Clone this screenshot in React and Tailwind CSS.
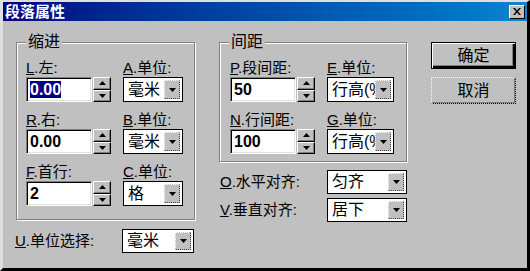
import React from 'react';

const FONT = "font-['Liberation_Sans','Noto_Sans_CJK_SC',sans-serif]";

function Arrow({ up }) {
  return (
    <svg width="7" height="4" viewBox="0 0 7 4" className="block">
      {up ? <path d="M3.5 0 L7 4 L0 4 Z" fill="#000" /> : <path d="M0 0 L7 0 L3.5 4 Z" fill="#000" />}
    </svg>
  );
}

function Label({ k, text }) {
  return (
    <div className="h-[18px] leading-[18px] text-[15px] whitespace-nowrap">
      <span className="underline">{k}</span>.{text}:
    </div>
  );
}

function Spinner() {
  return (
    <div className="flex flex-col w-[18px] h-[25px]">
      {[true, false].map((up) => (
        <div key={String(up)} className="flex-1 flex items-center justify-center bg-[#c0c0c0] border border-t-white border-l-white border-r-black border-b-black shadow-[inset_-1px_-1px_#808080]">
          <Arrow up={up} />
        </div>
      ))}
    </div>
  );
}

function NumberInput({ value, selected }) {
  return (
    <div className="w-[66px] h-[25px] bg-white border border-t-[#808080] border-l-[#808080] border-r-white border-b-white shadow-[inset_1px_1px_#000,inset_-1px_-1px_#dfdfdf] flex items-center pl-[3px]">
      <span className={selected ? 'bg-[#000080] text-white text-[16px] font-bold leading-[17px]' : 'text-[16px] font-bold leading-[17px]'}>{value}</span>
    </div>
  );
}

function Combo({ value, w, h = 'h-[25px]' }) {
  return (
    <div className={`${w} ${h} bg-white border border-black flex items-stretch p-[2px]`}>
      <div className="flex-1 overflow-hidden whitespace-nowrap text-[16px] leading-[18px] pl-[2px] flex items-center">{value}</div>
      <div className="w-[16px] shrink-0 bg-[#c0c0c0] border border-dotted border-t-white border-l-white border-r-[#404040] border-b-[#404040] flex items-center justify-center">
        <Arrow />
      </div>
    </div>
  );
}

function Group({ title, className, children }) {
  return (
    <div className={`relative border border-[#808080] shadow-[1px_1px_#fff,inset_1px_1px_#fff] ${className}`}>
      <div className="absolute -top-[10px] left-[9px] bg-[#c0c0c0] px-[2px] text-[16px] leading-[18px]">{title}</div>
      {children}
    </div>
  );
}

function Field({ k, text, value, selected }) {
  return (
    <div>
      <Label k={k} text={text} />
      <div className="flex gap-[1px]">
        <NumberInput value={value} selected={selected} />
        <Spinner />
      </div>
    </div>
  );
}

function UnitField({ k, value, w }) {
  return (
    <div>
      <Label k={k} text="单位" />
      <Combo value={value} w={w} />
    </div>
  );
}

export default function App() {
  return (
    <div className={`${FONT} w-[530px] h-[271px] bg-[#c0c0c0] text-black border-t-2 border-l-[3px] border-r-[3px] border-b-[3px] border-t-[#dfdfdf] border-l-[#dfdfdf] border-r-black border-b-black overflow-hidden`}>
      <div className="h-[19px] bg-linear-to-r from-[#000080] to-[#1084d0] flex items-center justify-between pl-[2px] pr-[2px]">
        <span className="text-white font-bold text-[15px] leading-[17px]">段落属性</span>
        <div className="w-[16px] h-[14px] bg-[#c0c0c0] border border-t-white border-l-white border-r-black border-b-black flex items-center justify-center">
          <svg width="8" height="7" viewBox="0 0 8 7">
            <path d="M0 0 L2 0 L4 2.5 L6 0 L8 0 L5 3.5 L8 7 L6 7 L4 4.5 L2 7 L0 7 L3 3.5 Z" fill="#000" />
          </svg>
        </div>
      </div>

      <div className="flex pt-[21px] pl-[13px]">
        <div className="w-[179px]">
          <Group title="缩进" className="h-[178px] pt-[16px] pl-[9px] flex flex-col gap-[9px]">
            <div className="flex gap-[12px]">
              <Field k="L" text="左" value="0.00" selected />
              <UnitField k="A" value="毫米" w="w-[60px]" />
            </div>
            <div className="flex gap-[12px]">
              <Field k="R" text="右" value="0.00" />
              <UnitField k="B" value="毫米" w="w-[60px]" />
            </div>
            <div className="flex gap-[12px]">
              <Field k="F" text="首行" value="2" />
              <UnitField k="C" value="格" w="w-[60px]" />
            </div>
          </Group>
          <div className="flex items-center mt-[9px]">
            <div className="w-[107px] text-[15px] leading-[18px] -ml-[1px]">
              <span className="underline">U</span>.单位选择:
            </div>
            <Combo value="毫米" w="w-[72px]" h="h-[24px]" />
          </div>
        </div>

        <div className="w-[188px] ml-[24px]">
          <Group title="间距" className="h-[120px] pt-[16px] pl-[10px] flex flex-col gap-[9px]">
            <div className="flex gap-[12px]">
              <Field k="P" text="段间距" value="50" />
              <UnitField k="E" value="行高(%)" w="w-[67px]" />
            </div>
            <div className="flex gap-[12px]">
              <Field k="N" text="行间距" value="100" />
              <UnitField k="G" value="行高(%)" w="w-[67px]" />
            </div>
          </Group>
          <div className="flex flex-col gap-[4px] mt-[8px]">
            <div className="flex items-center">
              <div className="w-[108px] text-[15px] leading-[18px] pl-[1px]">
                <span className="underline">O</span>.水平对齐:
              </div>
              <Combo value="匀齐" w="w-[80px]" h="h-[24px]" />
            </div>
            <div className="flex items-center">
              <div className="w-[108px] text-[15px] leading-[18px] pl-[1px]">
                <span className="underline">V</span>.垂直对齐:
              </div>
              <Combo value="居下" w="w-[80px]" h="h-[24px]" />
            </div>
          </div>
        </div>

        <div className="ml-[24px] flex flex-col gap-[8px]">
          <button className="w-[85px] h-[27px] bg-[#c0c0c0] border border-black shadow-[inset_1px_1px_#fff,inset_-2px_-2px_#000,inset_-3px_-3px_#808080] text-[16px] leading-[18px]">确定</button>
          <button className="w-[85px] h-[27px] bg-[#c0c0c0] border border-dotted border-t-white border-l-white border-r-black border-b-black shadow-[inset_-1px_-1px_#808080] text-[16px] leading-[18px]">取消</button>
        </div>
      </div>
    </div>
  );
}
